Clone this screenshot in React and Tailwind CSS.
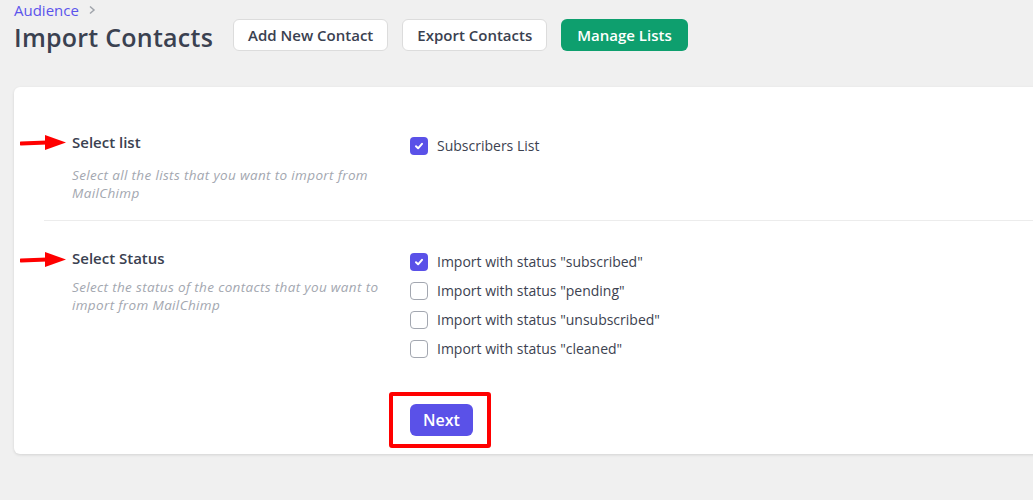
import React, { useState } from 'react';

const Arrow = ({ top }) => (
  <svg className="absolute left-[6px]" style={{ top }} width="48" height="18" viewBox="0 0 48 18">
    <path d="M1 9.5 L27 8.5" stroke="#ff0000" strokeWidth="4" strokeLinecap="round" fill="none" />
    <polygon points="25,1 46,8.5 25,16" fill="#ff0000" />
  </svg>
);

const Checkbox = ({ checked, onChange, label }) => (
  <label className="flex h-[29px] cursor-pointer items-center gap-[9px]">
    <span
      onClick={onChange}
      className={
        checked
          ? 'flex h-[18px] w-[18px] items-center justify-center rounded-[4px] bg-[#5a51e8]'
          : 'flex h-[18px] w-[18px] items-center justify-center rounded-[4px] border-[1.5px] border-[#a3a7b0] bg-white'
      }
    >
      {checked ? (
        <svg width="10" height="10" viewBox="0 0 10 10">
          <path d="M2 5.3 L4.1 7.3 L8 2.8" stroke="white" strokeWidth="2" fill="none" strokeLinecap="round" strokeLinejoin="round" />
        </svg>
      ) : null}
    </span>
    <span className="text-[14px] text-[#3c4250]">{label}</span>
  </label>
);

const App = () => {
  const [lists, setLists] = useState({ subscribers: true });
  const [status, setStatus] = useState({ subscribed: true, pending: false, unsubscribed: false, cleaned: false });

  const toggleStatus = (key) => setStatus({ ...status, [key]: !status[key] });

  return (
    <div className="min-h-[500px] overflow-hidden bg-[#f0f0f0] font-['Open_Sans',sans-serif]">
      <div className="px-[14px]">
        <div className="flex h-[20px] items-center gap-[8px] text-[15px] leading-[20px] text-[#5b54ec]">
          Audience
          <svg width="10" height="10" viewBox="0 0 10 10">
            <path d="M3 1.5 L7 5 L3 8.5" stroke="#a0a4ab" strokeWidth="1.5" fill="none" />
          </svg>
        </div>
        <div className="flex items-center">
          <h1 className="text-[25px] font-semibold leading-[34px] tracking-[0.25px] text-[#3a4150]">Import Contacts</h1>
          <div className="ml-[20px] mt-[-4px] flex items-center gap-[14px]">
            <button className="h-[32px] rounded-[6px] border border-[#dcdcdc] bg-white px-[14px] text-[15px] font-semibold text-[#3a4150]">
              Add New Contact
            </button>
            <button className="h-[32px] rounded-[6px] border border-[#dcdcdc] bg-white px-[14px] text-[15px] font-semibold text-[#3a4150]">
              Export Contacts
            </button>
            <button className="h-[32px] rounded-[6px] bg-[#0e9f6e] px-[16px] text-[15px] font-semibold text-white">
              Manage Lists
            </button>
          </div>
        </div>
      </div>

      <div className="relative ml-[14px] mt-[33px] w-[1040px] rounded-[6px] bg-white pb-[6px] shadow-[0_1px_3px_rgba(0,0,0,0.12)]">
        <Arrow top={47} />
        <Arrow top={164} />

        <div className="ml-[30px] flex border-b border-[#ececec] pb-[18px] pt-[43px]">
          <div className="w-[366px] pl-[28px] pr-[20px]">
            <div className="text-[15px] font-semibold leading-[24px] text-[#3a4150]">Select list</div>
            <p className="mt-[12px] text-[13.5px] italic leading-[18px] tracking-[0.35px] text-[#a3a7b0]">
              Select all the lists that you want to import from MailChimp
            </p>
          </div>
          <div className="mt-[1px]">
            <Checkbox
              checked={lists.subscribers}
              onChange={() => setLists({ subscribers: !lists.subscribers })}
              label="Subscribers List"
            />
          </div>
        </div>

        <div className="ml-[30px] flex pt-[25px]">
          <div className="w-[366px] pl-[28px] pr-[20px]">
            <div className="text-[15px] font-semibold leading-[24px] text-[#3a4150]">Select Status</div>
            <p className="mt-[8px] text-[13.5px] italic leading-[18px] tracking-[0.35px] text-[#a3a7b0]">
              Select the status of the contacts that you want to import from MailChimp
            </p>
          </div>
          <div className="mt-[1px]">
            {['subscribed', 'pending', 'unsubscribed', 'cleaned'].map((key) => (
              <Checkbox
                key={key}
                checked={status[key]}
                onChange={() => toggleStatus(key)}
                label={`Import with status "${key}"`}
              />
            ))}
          </div>
        </div>

        <div className="ml-[375px] mt-[29px] w-[102px] rounded-[3px] border-4 border-[#ff0000] pb-[8px] pl-[17px] pt-[8px]">
          <button className="h-[32px] w-[63px] rounded-[6px] bg-[#5a51e8] text-[16px] font-semibold text-white">
            Next
          </button>
        </div>
      </div>
    </div>
  );
};

export default App;
